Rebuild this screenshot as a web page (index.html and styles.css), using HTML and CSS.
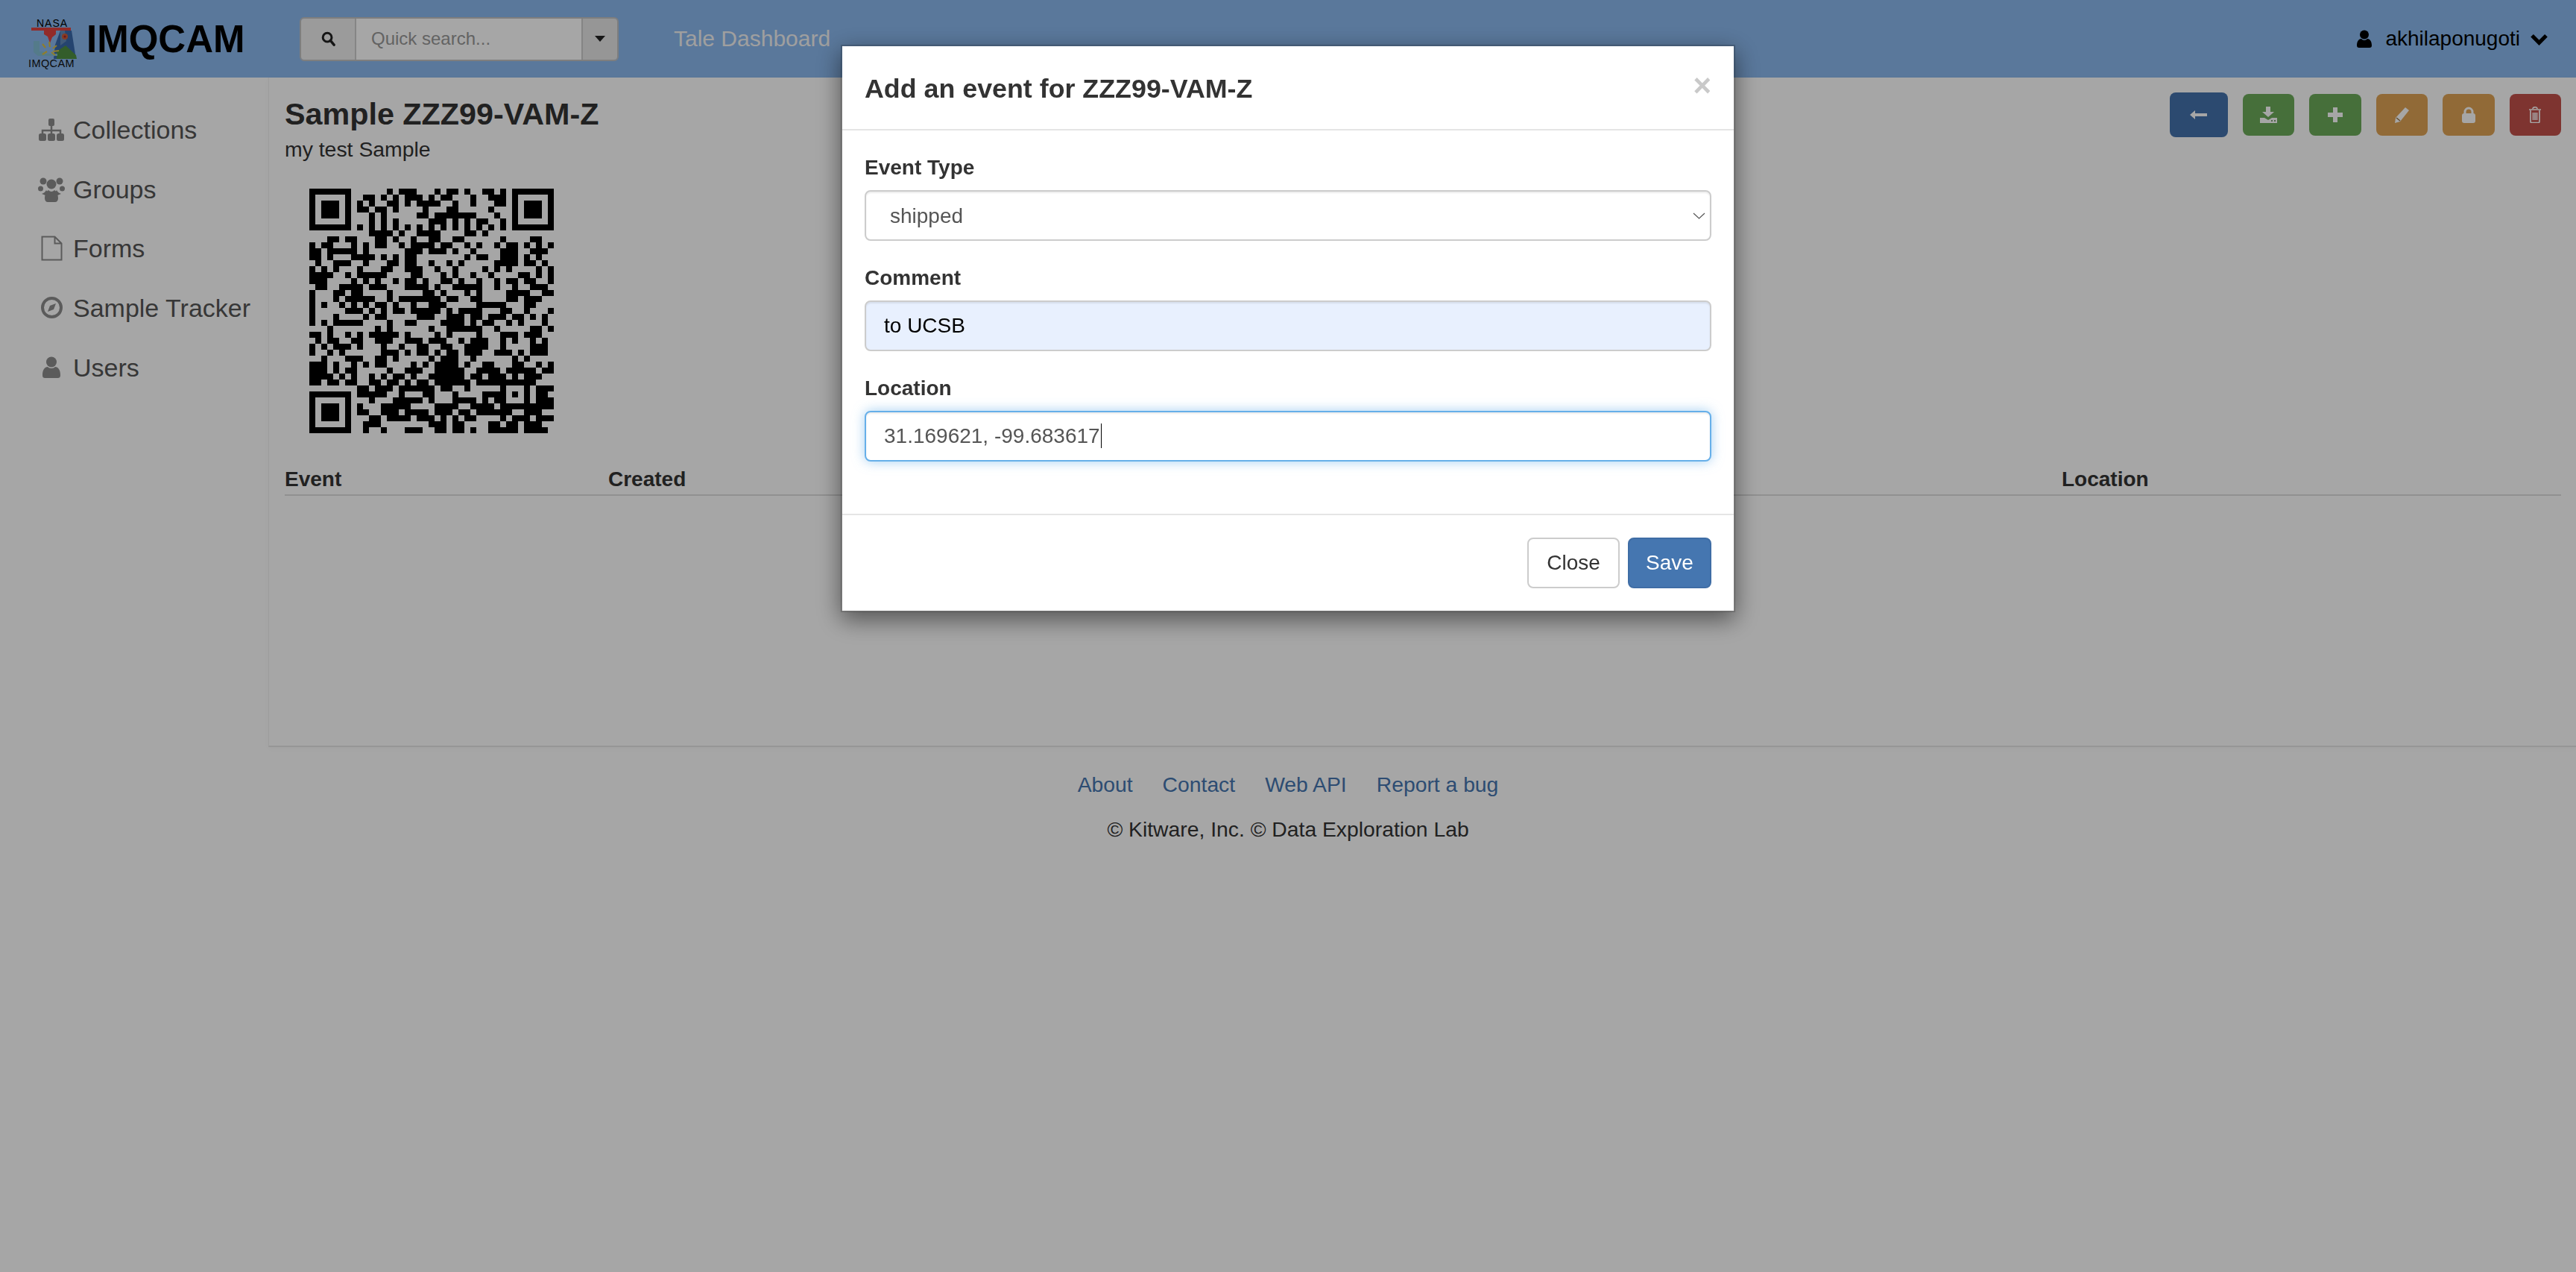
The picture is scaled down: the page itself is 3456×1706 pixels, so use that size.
FILE: index.html
```html
<!DOCTYPE html>
<html lang="en">
<head>
<meta charset="utf-8">
<title>Sample ZZZ99-VAM-Z</title>
<link rel="stylesheet" href="styles.css">
</head>
<body>
<header class="topbar">
  <a class="brand">
    <svg class="brand-logo" viewBox="0 0 70 72" width="70" height="72">
      <text class="logo-nasa" x="36" y="13" text-anchor="middle">NASA</text>
      <rect x="8" y="14" width="53" height="4" fill="#e04340"/>
      <path d="M25 18h16v5l-5 4-3 8-3-9-5-3z" fill="#e04340"/>
      <path d="M47 18h15l6 38H38l2-19z" fill="#3a69ab"/>
      <path d="M47 18h6l2 14-8 6z" fill="#658ab8"/>
      <circle cx="53" cy="26" r="4" fill="#d05c36"/>
      <circle cx="53" cy="26" r="1.6" fill="#a5232a"/>
      <path d="M42 46l12-8 14 13 1 5H42z" fill="#4f9042"/>
      <path d="M11 32h8v14h6v3h18v3H17l-6-5z" fill="#82bdd4"/>
      <path d="M23 36l4 5M32 33l1 7M42 38l-5 4M23 50l6-4M45 45l-8 1M40 51l-5-4" stroke="#dcc144" stroke-width="2.2" fill="none"/>
      <text class="logo-name" x="35" y="67" text-anchor="middle">IMQCAM</text>
    </svg>
    <span class="brand-name">IMQCAM</span>
  </a>
  <div class="search">
    <span class="search-addon">
      <svg viewBox="0 0 20 22" width="19" height="21"><circle cx="8.5" cy="8.5" r="6.2" fill="none" stroke="#222" stroke-width="3.2"/><path d="M13 13l5 6" stroke="#222" stroke-width="3.6" stroke-linecap="round"/></svg>
    </span>
    <input class="search-input" type="text" placeholder="Quick search...">
    <span class="search-caret"><svg viewBox="0 0 14 10" width="14" height="10"><path d="M0 1h14L7 9z" fill="#222"/></svg></span>
  </div>
  <a class="nav-link">Tale Dashboard</a>
  <div class="user">
    <svg viewBox="0 0 20 24" width="20" height="24"><circle cx="10" cy="6.5" r="6" fill="#000"/><path d="M0 21c0-6 3-9 6-9 1 1 2.500 2 4 2s3-1 4-2c3 0 6 3 6 9 0 2-1 3-3 3H3c-2 0-3-1-3-3z" fill="#000"/></svg>
    <span class="user-name">akhilaponugoti</span>
    <svg viewBox="0 0 26 18" width="25" height="17"><path d="M3 4l10 10L23 4" fill="none" stroke="#000" stroke-width="5.500"/></svg>
  </div>
</header>

<div class="layout">
  <nav class="sidebar">
    <a class="side-item">
      <span class="side-icon"><svg viewBox="0 0 34 30" width="34" height="30"><rect x="13" y="0" width="8" height="10" rx="2"/><path d="M17 9v6M5 21v-5h24v5M17 15v6" fill="none" stroke="#8d8d8d" stroke-width="2.500"/><rect x="0" y="20" width="10" height="10" rx="2.500"/><rect x="12" y="20" width="10" height="10" rx="2.500"/><rect x="24" y="20" width="10" height="10" rx="2.500"/></svg></span>
      Collections
    </a>
    <a class="side-item">
      <span class="side-icon"><svg viewBox="0 0 36 34" width="36" height="34"><circle cx="18" cy="10" r="6.500"/><circle cx="7" cy="6" r="4.500"/><circle cx="29" cy="6" r="4.500"/><circle cx="3.500" cy="16" r="3.500"/><circle cx="32.500" cy="16" r="3.500"/><path d="M5 23c3-1 5-3 6-5l2 3-3 4zM31 23c-3-1-5-3-6-5l-2 3 3 4z"/><path d="M9 29c0-6 3-10 5-11 1 1 3 2 4 2s3-1 4-2c2 1 5 5 5 11 0 3-2 5-4 5H13c-2 0-4-2-4-5z"/></svg></span>
      Groups
    </a>
    <a class="side-item">
      <span class="side-icon"><svg viewBox="0 0 29 34" width="29" height="34"><path d="M1.500 1.500h17l9 9v22h-26zM18.500 1.500v9h9" fill="none" stroke="#8d8d8d" stroke-width="2"/></svg></span>
      Forms
    </a>
    <a class="side-item">
      <span class="side-icon"><svg viewBox="0 0 29 29" width="29" height="29"><circle cx="14.500" cy="14.500" r="12.500" fill="none" stroke="#8d8d8d" stroke-width="4"/><path d="M20 9l-3 8-8 3 3-8z"/></svg></span>
      Sample Tracker
    </a>
    <a class="side-item">
      <span class="side-icon"><svg viewBox="0 0 24 29" width="24" height="29"><circle cx="12" cy="7.500" r="7"/><path d="M0 25c0-7 3-11 7-11 1 1 3 2 5 2s4-1 5-2c4 0 7 4 7 11 0 3-1 4-4 4H4c-3 0-4-1-4-4z"/></svg></span>
      Users
    </a>
  </nav>

  <main class="content">
    <div class="content-head">
      <div>
        <h1 class="sample-title">Sample ZZZ99-VAM-Z</h1>
        <p class="sample-desc">my test Sample</p>
      </div>
      <div class="actions">
        <a class="btn btn-back"><svg viewBox="0 0 23 12" width="23" height="12"><path d="M0 6l7-6v4h16v4H7v4z" fill="#fff"/></svg></a>
        <a class="btn btn-green"><svg viewBox="0 0 23 22" width="23" height="22"><path d="M8 0h6v7h5l-8 7-8-7h5z" fill="#fff"/><path d="M0 15h6l5 3 5-3h7v7H0z" fill="#fff"/><circle cx="16" cy="19" r="1" fill="#4f7a43"/><circle cx="20" cy="19" r="1" fill="#4f7a43"/></svg></a>
        <a class="btn btn-green"><svg viewBox="0 0 20 20" width="20" height="20"><path d="M7 0h6v7h7v6h-7v7H7v-7H0V7h7z" fill="#fff"/></svg></a>
        <a class="btn btn-orange"><svg viewBox="0 0 21 22" width="21" height="22"><path d="M15 1l5 4-12 15-7 2 1-7z" fill="#fff"/><path d="M3 15l5 4" stroke="#96703d" stroke-width="1.400"/></svg></a>
        <a class="btn btn-orange"><svg viewBox="0 0 18 22" width="18" height="22"><path d="M4 10V7a5 5 0 0 1 10 0v3" fill="none" stroke="#fff" stroke-width="3"/><rect x="0" y="9" width="18" height="13" rx="3" fill="#fff"/></svg></a>
        <a class="btn btn-red"><svg viewBox="0 0 18 22" width="18" height="22"><path d="M1 4h16M6 3c0-3 6-3 6 0M3 5v15c0 1 .5 1.500 1.500 1.500h9c1 0 1.500-.5 1.500-1.500V5M6.500 8v10M9 8v10M11.500 8v10" fill="none" stroke="#fff" stroke-width="1.700"/></svg></a>
      </div>
    </div>
    <svg class="qr" viewBox="0 0 41 41" width="328" height="328">
      <path fill="none" stroke="#000" stroke-width="1.02" d="
M0 .5h7M13 .5h1M15 .5h3M21 .5h1M23 .5h2M26 .5h1M29 .5h2M32 .5h1M34 .5h7
M0 1.500h1M6 1.500h1M9 1.500h2M12 1.500h1M14 1.500h1M16 1.500h3M20 1.500h1M22 1.500h2M27 1.500h1M30 1.500h3M34 1.500h1M40 1.500h1
M0 2.500h1M2 2.500h3M6 2.500h1M8 2.500h1M10 2.500h1M13 2.500h2M16 2.500h1M18 2.500h4M24 2.500h1M27 2.500h1M31 2.500h2M34 2.500h1M36 2.500h3M40 2.500h1
M0 3.500h1M2 3.500h3M6 3.500h1M8 3.500h2M11 3.500h2M14 3.500h1M19 3.500h1M23 3.500h2M30 3.500h1M34 3.500h1M36 3.500h3M40 3.500h1
M0 4.500h1M2 4.500h3M6 4.500h1M10 4.500h1M12 4.500h1M18 4.500h2M21 4.500h7M31 4.500h1M34 4.500h1M36 4.500h3M40 4.500h1
M0 5.500h1M6 5.500h1M10 5.500h1M12 5.500h1M14 5.500h1M20 5.500h3M24 5.500h1M26 5.500h1M28 5.500h2M32 5.500h1M34 5.500h1M40 5.500h1
M0 6.500h7M8 6.500h1M10 6.500h1M12 6.500h1M14 6.500h1M16 6.500h1M18 6.500h1M20 6.500h1M22 6.500h1M24 6.500h1M26 6.500h1M28 6.500h1M30 6.500h1M32 6.500h1M34 6.500h7
M10 7.500h4M15 7.500h1M18 7.500h4M26 7.500h2M29 7.500h1
M3 8.500h2M6 8.500h2M11 8.500h2M14 8.500h1M17 8.500h1M20 8.500h2M24 8.500h2M32 8.500h1M37 8.500h2
M0 9.500h1M2 9.500h2M7 9.500h1M9 9.500h1M11 9.500h2M15 9.500h1M17 9.500h4M22 9.500h2M26 9.500h1M28 9.500h1M31 9.500h1M33 9.500h2M36 9.500h1M38 9.500h1M40 9.500h1
M0 10.500h2M3 10.500h5M9 10.500h1M16 10.500h3M20 10.500h3M24 10.500h1M27 10.500h1M32 10.500h3M37 10.500h3
M0 11.500h2M3 11.500h1M7 11.500h4M12 11.500h1M14 11.500h1M16 11.500h2M26 11.500h1M28 11.500h2M32 11.500h3M36 11.500h1M38 11.500h1
M1 12.500h1M4 12.500h3M9 12.500h1M13 12.500h2M16 12.500h2M20 12.500h1M23 12.500h1M25 12.500h1M31 12.500h4M36 12.500h2M39 12.500h1
M0 13.500h1M2 13.500h1M4 13.500h1M8 13.500h1M12 13.500h2M16 13.500h3M21 13.500h1M24 13.500h1M29 13.500h1M31 13.500h1M33 13.500h1M38 13.500h1M40 13.500h1
M0 14.500h4M6 14.500h1M8 14.500h5M17 14.500h2M22 14.500h1M24 14.500h1M27 14.500h1M30 14.500h1M35 14.500h2M38 14.500h1M40 14.500h1
M0 15.500h3M7 15.500h1M9 15.500h1M11 15.500h1M14 15.500h1M16 15.500h2M19 15.500h1M22 15.500h2M25 15.500h1M28 15.500h1M31 15.500h1M33 15.500h2M36 15.500h2M40 15.500h1
M1 16.500h2M5 16.500h4M10 16.500h3M16 16.500h4M21 16.500h1M24 16.500h5M31 16.500h1M34 16.500h1M37 16.500h3
M0 17.500h1M4 17.500h2M7 17.500h2M13 17.500h1M19 17.500h2M22 17.500h1M26 17.500h1M28 17.500h1M33 17.500h4M39 17.500h2
M0 18.500h1M4 18.500h1M6 18.500h5M13 18.500h1M15 18.500h7M23 18.500h2M27 18.500h2M33 18.500h2M36 18.500h3
M0 19.500h1M2 19.500h1M5 19.500h1M7 19.500h1M9 19.500h1M11 19.500h2M14 19.500h1M17 19.500h1M20 19.500h3M28 19.500h5M36 19.500h2
M0 20.500h1M6 20.500h3M10 20.500h1M12 20.500h1M14 20.500h2M17 20.500h5M23 20.500h1M25 20.500h4M32 20.500h2M36 20.500h1M40 20.500h1
M0 21.500h1M4 21.500h1M9 21.500h1M11 21.500h2M18 21.500h3M23 21.500h3M27 21.500h2M30 21.500h3M34 21.500h2M37 21.500h1M39 21.500h1
M0 22.500h1M2 22.500h1M4 22.500h5M13 22.500h1M16 22.500h2M22 22.500h4M27 22.500h1M29 22.500h2M33 22.500h1M35 22.500h1M39 22.500h1
M3 23.500h1M11 23.500h1M13 23.500h1M20 23.500h1M23 23.500h6M31 23.500h1M37 23.500h2M40 23.500h1
M0 24.500h2M3 24.500h1M6 24.500h1M8 24.500h1M10 24.500h5M16 24.500h1M21 24.500h1M23 24.500h1M28 24.500h1M32 24.500h3M36 24.500h3
M1 25.500h1M3 25.500h2M7 25.500h2M11 25.500h3M16 25.500h3M20 25.500h3M25 25.500h1M27 25.500h3M32 25.500h1M34 25.500h1M37 25.500h1M39 25.500h1
M0 26.500h1M2 26.500h1M4 26.500h3M8 26.500h1M12 26.500h1M15 26.500h1M18 26.500h2M22 26.500h2M26 26.500h4M32 26.500h1M37 26.500h3
M0 27.500h1M3 27.500h1M5 27.500h1M12 27.500h3M16 27.500h1M18 27.500h2M21 27.500h1M23 27.500h2M26 27.500h3M31 27.500h3M35 27.500h1M37 27.500h3
M2 28.500h1M6 28.500h3M11 28.500h2M14 28.500h1M20 28.500h1M22 28.500h3M27 28.500h1M34 28.500h1M36 28.500h1
M0 29.500h3M4 29.500h1M7 29.500h1M9 29.500h1M11 29.500h2M17 29.500h1M19 29.500h1M21 29.500h4M26 29.500h1M29 29.500h2M34 29.500h2M38 29.500h1M40 29.500h1
M0 30.500h3M4 30.500h1M6 30.500h2M13 30.500h1M16 30.500h3M21 30.500h5M28 30.500h4M33 30.500h5M39 30.500h2
M0 31.500h4M5 31.500h1M7 31.500h1M10 31.500h1M12 31.500h1M14 31.500h2M17 31.500h1M20 31.500h6M27 31.500h2M30 31.500h3M34 31.500h1M36 31.500h3
M0 32.500h2M3 32.500h2M6 32.500h2M10 32.500h2M13 32.500h2M16 32.500h1M18 32.500h2M21 32.500h6M28 32.500h10
M8 33.500h2M11 33.500h3M15 33.500h6M22 33.500h2M26 33.500h1M32 33.500h1M36 33.500h1M38 33.500h3
M0 34.500h7M8 34.500h5M15 34.500h1M19 34.500h2M24 34.500h1M29 34.500h4M34 34.500h1M36 34.500h1M38 34.500h2
M0 35.500h1M6 35.500h1M10 35.500h1M14 35.500h5M20 35.500h1M24 35.500h4M29 35.500h1M31 35.500h2M36 35.500h1M38 35.500h3
M0 36.500h1M2 36.500h3M6 36.500h1M8 36.500h1M12 36.500h5M21 36.500h4M27 36.500h4M32 36.500h9
M0 37.500h1M2 37.500h3M6 37.500h1M8 37.500h2M12 37.500h3M16 37.500h4M21 37.500h3M25 37.500h2M28 37.500h6M36 37.500h3
M0 38.500h1M2 38.500h3M6 38.500h1M10 38.500h2M13 38.500h4M18 38.500h3M22 38.500h1M24 38.500h1M26 38.500h2M32 38.500h1M34 38.500h3M38 38.500h3
M0 39.500h1M6 39.500h1M9 39.500h3M20 39.500h3M24 39.500h2M30 39.500h2M33 39.500h2M36 39.500h3
M0 40.500h7M9 40.500h1M12 40.500h1M16 40.500h3M21 40.500h2M24 40.500h2M27 40.500h1M30 40.500h5M36 40.500h4"/>
    </svg>
    <div class="table-head">
      <span class="col-event">Event</span>
      <span class="col-created">Created</span>
      <span class="col-location">Location</span>
    </div>
  </main>
</div>

<footer class="footer">
  <div class="footer-links">
    <a>About</a><a>Contact</a><a>Web API</a><a>Report a bug</a>
  </div>
  <div class="footer-copy">© Kitware, Inc. © Data Exploration Lab</div>
</footer>

<div class="backdrop"></div>

<section class="modal">
  <div class="modal-header">
    <h4 class="modal-title">Add an event for ZZZ99-VAM-Z</h4>
    <span class="modal-close">×</span>
  </div>
  <form class="modal-body">
    <div class="form-group">
      <label class="form-label">Event Type</label>
      <div class="select-wrap">
        <select class="form-control form-select"><option>shipped</option></select>
        <svg class="select-chevron" viewBox="0 0 17 9" width="17" height="9"><path d="M1 1l7.500 7L16 1" fill="none" stroke="#555" stroke-width="1.200"/></svg>
      </div>
    </div>
    <div class="form-group">
      <label class="form-label">Comment</label>
      <input class="form-control form-autofill" type="text" value="to UCSB">
    </div>
    <div class="form-group">
      <label class="form-label">Location</label>
      <div class="select-wrap">
        <input class="form-control form-focus" type="text" value="31.169621, -99.683617">
        <span class="caret-line"></span>
      </div>
    </div>
  </form>
  <div class="modal-footer">
    <a class="mbtn mbtn-close">Close</a>
    <a class="mbtn mbtn-save">Save</a>
  </div>
</section>
</body>
</html>
```
FILE: styles.css
```css
* { box-sizing: border-box; }
html, body { margin: 0; padding: 0; }
body {
  min-height: 1706px;
  background: #fff;
  color: #333;
  font-family: "Liberation Sans", Arial, sans-serif;
  font-size: 28px;
  line-height: 40px;
}

/* top bar */
.topbar {
  display: flex;
  align-items: center;
  height: 104px;
  background: #8ab8ee;
}
.brand { display: flex; align-items: center; margin-left: 34px; width: 368px; }
.brand-logo { display: block; flex: none; margin-top: 14px; overflow: visible; }
.logo-nasa { font-family: "Liberation Sans", sans-serif; font-size: 14px; letter-spacing: 1px; fill: #000; }
.logo-name { font-family: "Liberation Sans", sans-serif; font-size: 14.500px; letter-spacing: .4px; fill: #111; }
.brand-name {
  margin: 2px 0 0 12px;
  color: #000;
  font-size: 51px;
  font-weight: 700;
  line-height: 60px;
}
.search {
  display: flex;
  width: 428px;
  height: 59px;
  border: 2px solid #c2c2c2;
  border-radius: 6px;
  overflow: hidden;
}
.search-addon {
  display: flex;
  align-items: center;
  justify-content: center;
  width: 74px;
  background: #eee;
  border-right: 2px solid #ccc;
}
.search-input {
  width: 302px;
  padding: 0 20px;
  border: 0;
  background: #fff;
  font: 24px "Liberation Sans", Arial, sans-serif;
  outline: none;
}
.search-input::placeholder { color: #999; opacity: 1; }
.search-caret {
  display: flex;
  flex: 1;
  align-items: center;
  justify-content: center;
  background: #e6e6e6;
  border-left: 2px solid #ccc;
}
.nav-link { margin-left: 74px; color: #f4f4f4; font-size: 30px; }
.user {
  display: flex;
  align-items: center;
  margin-left: auto;
  padding-right: 37px;
  color: #000;
}
.user-name { margin: 0 13px 0 18px; }

/* page body */
.layout { display: flex; }
.sidebar { flex: none; width: 360px; padding: 30px 0 0 51px; }
.side-item {
  display: flex;
  align-items: center;
  height: 79.700px;
  color: #555;
  font-size: 34px;
}
.side-icon { display: flex; justify-content: center; flex: none; width: 36px; margin-right: 11px; }
.side-icon svg { fill: #8d8d8d; }
.content {
  flex: 1;
  height: 898px;
  padding: 20px 20px 0 21px;
  border-left: 1px solid #f2f2f2;
  border-bottom: 2px solid #e6e6e6;
  box-shadow: 0 2px 6px rgba(0, 0, 0, .03);
}
.content-head { display: flex; justify-content: space-between; align-items: flex-start; }
.sample-title {
  margin: 6px 0 0;
  font-size: 41.300px;
  font-weight: 700;
  line-height: 46px;
}
.sample-desc { margin: 4px 0 0; font-size: 28.400px; }
.actions { display: flex; align-items: center; gap: 20px; }
.btn {
  display: flex;
  align-items: center;
  justify-content: center;
  width: 69.500px;
  height: 56px;
  border-radius: 8px;
}
.btn-back { width: 78px; height: 60px; background: #4472ac; }
.btn-green { background: #6cab5a; }
.btn-orange { background: #dfa355; }
.btn-red { background: #c2504b; }
.qr {
  display: block;
  margin: 33px 0 0 33px;
  shape-rendering: crispEdges;
}
.table-head {
  display: flex;
  margin-top: 42px;
  border-bottom: 2px solid #ddd;
  font-weight: 700;
}
.col-event { width: 434px; }
.col-created { width: 1950px; }

/* footer */
.footer { padding-top: 30px; font-size: 28.300px; text-align: center; }
.footer-links { display: flex; justify-content: center; gap: 40px; color: #4576b0; }
.footer-copy { margin-top: 20px; }

/* modal */
.backdrop { position: fixed; inset: 0; background: rgba(0, 0, 0, .35); }
.modal {
  position: fixed;
  top: 60px;
  left: 1128px;
  width: 1200px;
  background: #fff;
  border: 2px solid rgba(0, 0, 0, .2);
  background-clip: padding-box;
  box-shadow: 0 10px 30px rgba(0, 0, 0, .5);
}
.modal-header {
  display: flex;
  justify-content: space-between;
  align-items: flex-start;
  padding: 30px;
  border-bottom: 2px solid #e5e5e5;
}
.modal-title {
  margin: 2px 0 -2px;
  font-size: 35.800px;
  font-weight: 700;
  line-height: 51px;
}
.modal-close {
  margin-top: 2px;
  color: #c9c9c9;
  font-size: 42px;
  font-weight: 700;
  line-height: 42px;
}
.modal-body { padding: 30px 30px 10px; }
.form-group { margin-bottom: 30px; }
.form-label { display: block; margin-bottom: 10px; font-weight: 700; }
.form-control {
  display: block;
  width: 100%;
  height: 68px;
  padding: 0 24px;
  border: 2px solid #ccc;
  border-radius: 8px;
  background: #fff;
  box-shadow: inset 0 2px 2px rgba(0, 0, 0, .075);
  color: #555;
  font: 28px "Liberation Sans", Arial, sans-serif;
  outline: none;
}
.form-select { padding-left: 32px; appearance: none; }
.form-autofill { background: #e8f0fe; color: #000; }
.form-focus {
  border-color: #66afe9;
  box-shadow: inset 0 2px 2px rgba(0, 0, 0, .075), 0 0 16px rgba(102, 175, 233, .6);
}
.select-wrap { position: relative; }
.select-chevron { position: absolute; right: 8px; top: 30px; }
.caret-line {
  position: absolute;
  left: 317px;
  top: 17px;
  width: 1px;
  height: 33px;
  background: #000;
}
.modal-footer {
  display: flex;
  justify-content: flex-end;
  gap: 11px;
  margin-top: 30px;
  padding: 30px;
  border-top: 2px solid #e5e5e5;
}
.mbtn {
  display: flex;
  align-items: center;
  justify-content: center;
  height: 68px;
  border-radius: 8px;
  border: 2px solid #ccc;
}
.mbtn-close { width: 124px; }
.mbtn-save { width: 112px; border-color: #3f6da5; background: #4576b0; color: #fff; }
```
